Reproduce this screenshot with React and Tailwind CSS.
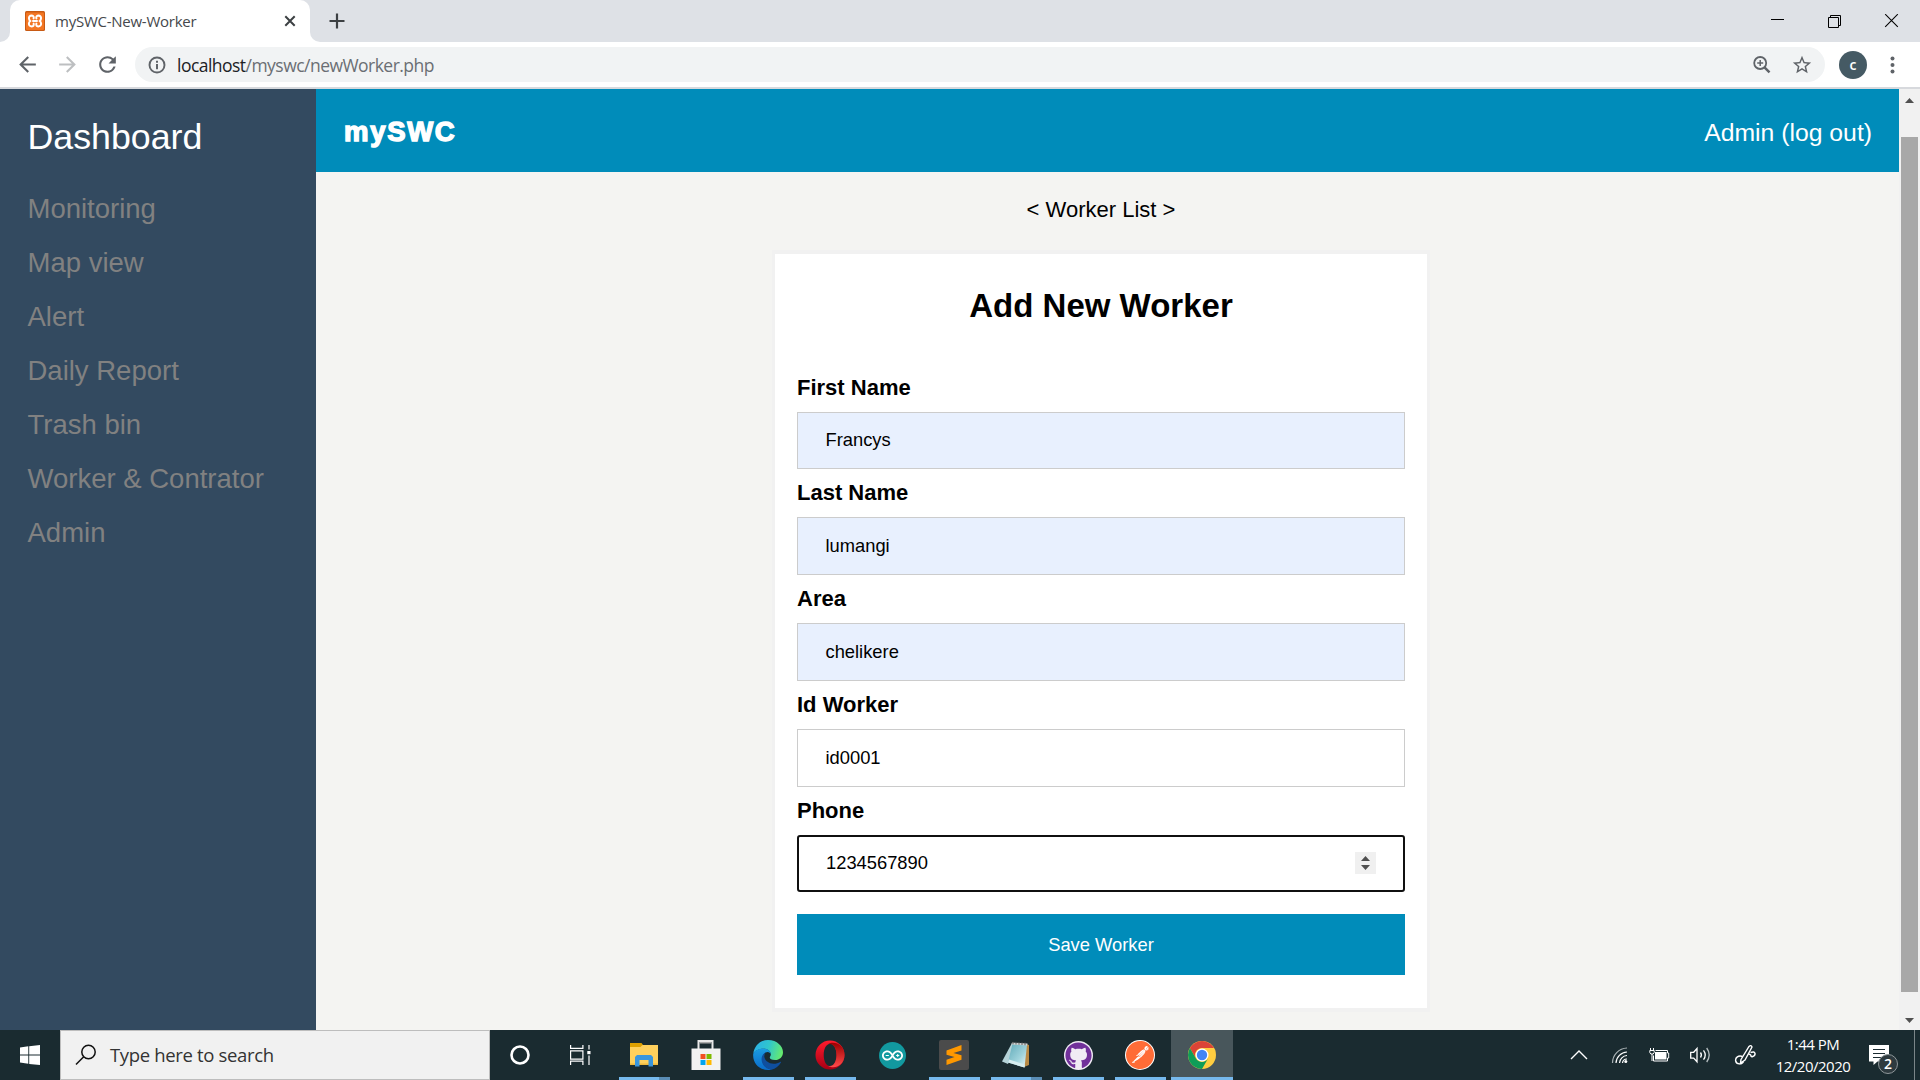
import React from "react";
import { FaGithub } from "react-icons/fa";
import { SiPostman, SiArduino } from "react-icons/si";

const UI = "font-['Open_Sans','Noto_Sans',sans-serif]";

function TabStrip() {
  return (
    <div className="flex h-[42px] items-center bg-[#dee1e6]">
      <div className="flex h-full w-[10px] bg-white">
        <div className="h-full w-full rounded-br-[10px] bg-[#dee1e6]" />
      </div>
      <div className="flex h-full w-[300px] items-center rounded-t-[10px] bg-white pl-[15px]">
        <svg width="20" height="20" viewBox="0 0 20 20">
          <rect width="20" height="20" rx="1.5" fill="#c85a14" />
          <rect x="1" y="1.5" width="18" height="17.5" rx="1" fill="#f37623" />
          <path
            d="M8.600 7.600Q9.300 4.800 6.800 4.600Q3.600 4.800 4 7.600Q4.200 9.200 5.200 10Q4 11 3.900 12.600Q3.800 15.300 6.800 15.400Q9.300 15.200 8.600 12.600M11.400 7.600Q10.700 4.800 13.200 4.600Q16.400 4.800 16 7.600Q15.800 9.200 14.800 10Q16 11 16.100 12.600Q16.200 15.300 13.200 15.400Q10.700 15.200 11.400 12.600M8 10h4"
            fill="none"
            stroke="#fff"
            strokeWidth="2"
            strokeLinecap="round"
          />
        </svg>
        <span className={`ml-[10px] w-[200px] whitespace-nowrap text-[15px] tracking-[-0.25px] text-[#45484c] ${UI}`}>
          mySWC-New-Worker
        </span>
        <svg className="ml-[29px]" width="12" height="12" viewBox="0 0 12 12">
          <path d="M1.300 1.300l9.400 9.400M10.700 1.300l-9.400 9.400" stroke="#3c4043" strokeWidth="2" />
        </svg>
      </div>
      <div className="h-full w-[10px] bg-white">
        <div className="h-full w-full rounded-bl-[10px] bg-[#dee1e6]" />
      </div>
      <svg className="ml-[9px]" width="16" height="16" viewBox="0 0 16 16">
        <path d="M8 .5v15M.5 8h15" stroke="#3c4043" strokeWidth="2.200" />
      </svg>
      <div className="ml-auto flex h-[38px] items-center gap-[42px] pr-[21px]">
        <svg width="15" height="15" viewBox="0 0 15 15">
          <path d="M1 5.500h13" stroke="#000" />
        </svg>
        <svg width="15" height="15" viewBox="0 0 15 15" fill="none" stroke="#000">
          <path d="M1.500 3.500h10v10h-10zM3.500 3v-1.500h10v10h-1.500" />
        </svg>
        <svg width="15" height="15" viewBox="0 0 15 15">
          <path d="M1.200 .2l12.600 12.600M13.800 .2l-12.600 12.600" stroke="#000" strokeWidth="1.100" />
        </svg>
      </div>
    </div>
  );
}

function Toolbar() {
  return (
    <div className="flex h-[47px] items-center border-b-2 border-[#d7d9dd] bg-white pl-[15px]">
      <svg width="25" height="25" viewBox="0 0 24 24" fill="#5f6368">
        <path d="M20 11H7.830l5.590-5.590L12 4l-8 8 8 8 1.410-1.410L7.830 13H20v-2z" />
      </svg>
      <svg className="ml-[15px]" width="25" height="25" viewBox="0 0 24 24" fill="#bdbfc1">
        <path d="M12 4l-1.410 1.410L16.170 11H4v2h12.170l-5.580 5.590L12 20l8-8z" />
      </svg>
      <svg className="ml-[15px]" width="25" height="25" viewBox="0 0 24 24" fill="#5f6368">
        <path d="M17.650 6.350A7.958 7.958 0 0 0 12 4c-4.420 0-7.990 3.580-7.990 8s3.570 8 7.990 8c3.730 0 6.840-2.550 7.730-6h-2.080A5.990 5.990 0 0 1 12 18c-3.310 0-6-2.690-6-6s2.690-6 6-6c1.660 0 3.140.69 4.220 1.780L13 11h7V4l-2.350 2.350z" />
      </svg>
      <div className="ml-[15px] flex h-[35px] w-[1690px] items-center rounded-full bg-[#f1f3f4] pl-[12px] pr-[12px]">
        <svg width="20" height="20" viewBox="0 0 20 20">
          <circle cx="10" cy="10" r="7.500" fill="none" stroke="#5f6368" strokeWidth="1.900" />
          <path d="M10 9v5.200M10 5.800v2" stroke="#5f6368" strokeWidth="2" />
        </svg>
        <span className={`ml-[10px] whitespace-nowrap pt-px text-[17.5px] tracking-[-0.53px] text-[#6a6e73] ${UI}`}>
          <span className="text-[#202124]">localhost</span>/myswc/newWorker.php
        </span>
        <svg className="ml-auto" width="20" height="20" viewBox="0 0 20 20" fill="none" stroke="#5f6368">
          <circle cx="8.200" cy="8" r="6" strokeWidth="1.800" />
          <path d="M12.500 12.300l5 5" strokeWidth="2.400" />
          <path d="M8.200 5v6M5.200 8h6" strokeWidth="1.500" />
        </svg>
        <svg className="ml-[19px]" width="22" height="22" viewBox="0 0 24 24" fill="#5f6368">
          <path d="M22 9.240l-7.190-.62L12 2 9.190 8.630 2 9.240l5.460 4.730L5.820 21 12 17.270 18.180 21l-1.630-7.030L22 9.240zM12 15.400l-3.760 2.270 1-4.280-3.320-2.880 4.380-.38L12 6.100l1.710 4.040 4.380.38-3.320 2.880 1 4.280L12 15.400z" />
        </svg>
      </div>
      <div className={`ml-[14px] flex h-[28px] w-[28px] items-center justify-center rounded-full bg-[#455a64] text-[14px] font-semibold text-white ${UI}`}>
        <span>c</span>
      </div>
      <svg className="ml-[23px]" width="5" height="18" viewBox="0 0 5 18" fill="#5f6368">
        <circle cx="2.500" cy="2.500" r="2" />
        <circle cx="2.500" cy="9" r="2" />
        <circle cx="2.500" cy="15.500" r="2" />
      </svg>
    </div>
  );
}

const NAV = ["Monitoring", "Map view", "Alert", "Daily Report", "Trash bin", "Worker & Contrator", "Admin"];

function Sidebar() {
  return (
    <nav className="w-[316px] shrink-0 bg-[#334a60] pl-[27.5px]">
      <div className="h-[93px] pt-[21px] text-[35.75px] leading-[54px] text-white">Dashboard</div>
      {NAV.map((n) => (
        <div key={n} className="h-[54px] text-[27.5px] leading-[54px] text-[#818181]">
          {n}
        </div>
      ))}
    </nav>
  );
}

function Field({ label, children }) {
  return (
    <label className="block">
      <div className="h-[48px] text-[22px] font-bold leading-[48px]">{label}</div>
      {children}
    </label>
  );
}

const BOX = "flex items-center border border-[#ccc] pl-[27.5px] text-[18.33px]";

function WorkerForm() {
  return (
    <div className="w-[658px] border-x-[3px] border-y-4 border-[#f1f1f1] bg-white px-[22px] pb-[33px]">
      <h2 className="mb-[12px] h-[98px] pt-[5px] text-center text-[33px] font-bold leading-[94px]">Add New Worker</h2>
      <div>
        <Field label="First Name">
          <div className={`h-[57px] bg-[#e8f0fe] pb-[2px] ${BOX}`}>Francys</div>
        </Field>
        <Field label="Last Name">
          <div className={`h-[58px] bg-[#e8f0fe] ${BOX}`}>lumangi</div>
        </Field>
        <Field label="Area">
          <div className={`h-[58px] bg-[#e8f0fe] ${BOX}`}>chelikere</div>
        </Field>
        <Field label="Id Worker">
          <div className={`h-[58px] bg-white ${BOX}`}>id0001</div>
        </Field>
        <Field label="Phone">
          <div className="flex h-[57px] items-center justify-between rounded-[3px] border-2 border-[#101010] pb-px pl-[27px] pr-[27px] text-[18.33px]">
            1234567890
            <span className="flex h-[22px] w-[21px] items-center justify-center bg-[#f0f0f0]">
              <svg width="9" height="14" viewBox="0 0 9 14" fill="#505050">
                <path d="M0 5L4.500 0L9 5zM0 9h9L4.500 14z" />
              </svg>
            </span>
          </div>
        </Field>
      </div>
      <div className="mt-[22px] flex h-[61px] items-center justify-center bg-[#008cba] text-[18.33px] text-white">
        Save Worker
      </div>
    </div>
  );
}

function Page() {
  return (
    <div className="flex h-[941px] font-['Liberation_Sans',Arial,sans-serif] text-black">
      <Sidebar />
      <div className="flex w-[1583px] flex-col bg-[#f4f4f2]">
        <header className="flex h-[83px] items-center justify-between bg-[#008cba] pl-[28px] pr-[27px] pt-[5px] text-white">
          <span className="pb-[3px] text-[27.5px] font-bold tracking-[1.7px] [-webkit-text-stroke:1.4px_white]">mySWC</span>
          <span className="text-[24.75px]">Admin (log out)</span>
        </header>
        <main className="flex flex-col items-center pr-[13px]">
          <div className="h-[78px] text-[22px] leading-[76px]">&lt; Worker List &gt;</div>
          <WorkerForm />
        </main>
      </div>
      <div className="flex w-[21px] flex-col items-center bg-[#f1f1f1] pt-[9px]">
        <svg width="9" height="5" viewBox="0 0 9 5">
          <path d="M0 5L4.500 0L9 5z" fill="#505050" />
        </svg>
        <div className="mt-[34px] h-[855px] w-[17px] bg-[#a8a8a8]" />
        <svg className="mt-[26px]" width="9" height="5" viewBox="0 0 9 5">
          <path d="M0 0h9L4.500 5z" fill="#505050" />
        </svg>
      </div>
    </div>
  );
}

function ExplorerIcon() {
  return (
    <svg width="28" height="24" viewBox="0 0 28 24">
      <path d="M0 0h11.500l1.500 2-1.500 4H0z" fill="#dea000" />
      <path d="M0 4h10.500l2-2H28v20H0z" fill="#ffd05c" />
      <path d="M0 20.500h28V22H0z" fill="#eeb93c" />
      <path d="M5 23.500V14l2-2h14l2 2v9.500h-4.500V17h-9v6.500z" fill="#3a96dd" />
    </svg>
  );
}

function StoreIcon() {
  return (
    <svg width="30" height="30" viewBox="0 0 30 30">
      <path d="M7.500 9V1h14v8" fill="none" stroke="#e9e9e9" strokeWidth="2" />
      <path d="M8.500 2h12v1.500h-12z" fill="#a9a9a9" />
      <path d="M.5 8.500h29V30H.5z" fill="#f2f2f2" />
      <path d="M9.500 14h5v5h-5z" fill="#f25022" />
      <path d="M15.500 14h5v5h-5z" fill="#7fba00" />
      <path d="M9.500 20h5v5h-5z" fill="#00a4ef" />
      <path d="M15.500 20h5v5h-5z" fill="#ffb900" />
    </svg>
  );
}

function EdgeIcon() {
  return (
    <svg width="30" height="30" viewBox="0 0 256 256">
      <defs>
        <linearGradient id="edgeTop" x1="0" y1="0.300" x2="1" y2="0.500">
          <stop offset="0" stopColor="#2ab0e8" />
          <stop offset="0.500" stopColor="#30c6cc" />
          <stop offset="1" stopColor="#66eb6e" />
        </linearGradient>
        <linearGradient id="edgeLeft" x1="0.500" y1="0" x2="0.500" y2="1">
          <stop offset="0" stopColor="#1b9de2" />
          <stop offset="1" stopColor="#0a6bc9" />
        </linearGradient>
      </defs>
      <path
        d="M2 118C10 50 62 0 128 0c78 0 128 54 128 104 0 40-30 67-67 67-31 0-46-11-46-21 0-8 9-11 9-28 0-24-25-47-62-47C48 75 10 96 2 118z"
        fill="url(#edgeTop)"
      />
      <path
        d="M2 118c9-26 44-46 84-46 40 0 66 24 66 48-4-8-14-17-27-17-25 0-45 24-45 60 0 48 34 82 78 88-10 3-20 5-30 5C52 256-6 194 2 118z"
        fill="url(#edgeLeft)"
      />
      <path
        d="M108 106c-10 14-14 28-10 44 8 30 36 52 78 52 22 0 40-6 56-15 5-3 9 1 6 6-16 30-45 54-81 60-47-5-84-42-84-88 0-28 13-49 35-59z"
        fill="#0f4f9e"
      />
    </svg>
  );
}

function OperaIcon() {
  return (
    <svg width="30" height="30" viewBox="0 0 30 30">
      <defs>
        <linearGradient id="operaL" x1="0" y1="0" x2="0" y2="1">
          <stop offset="0" stopColor="#ff1b2d" />
          <stop offset="1" stopColor="#a70014" />
        </linearGradient>
        <linearGradient id="operaR" x1="0" y1="0" x2="0" y2="1">
          <stop offset="0" stopColor="#9c0000" />
          <stop offset="1" stopColor="#ff4b4b" />
        </linearGradient>
      </defs>
      <path
        fillRule="evenodd"
        d="M15 .5a14.500 14.500 0 1 0 0 29a14.500 14.500 0 1 0 0-29zM15.200 3.800c4 0 6.300 5 6.300 11.200s-2.300 11.200-6.300 11.200S8.700 21.200 8.700 15s2.500-11.200 6.500-11.200z"
        fill="url(#operaL)"
      />
      <path
        d="M13 4.300C18 2.500 21.500 8 21.500 15s-3.500 12.500-8.500 10.700C18.500 29.500 29.500 26 29.500 15S18.500.5 13 4.300z"
        fill="url(#operaR)"
      />
    </svg>
  );
}

function ArduinoIcon() {
  return (
    <span className="flex h-[27px] w-[27px] items-center justify-center rounded-full bg-[#12999f]">
      <SiArduino size={21} color="#fff" />
    </span>
  );
}

function SublimeIcon() {
  return (
    <svg width="30" height="30" viewBox="0 0 30 30">
      <rect width="30" height="30" rx="2" fill="#4b4b4b" />
      <path d="M7.500 10.500L22.500 5v5.500L14.500 13l8 2.300v4.500L7.500 25v-5.200l8-2.800-8-2.300z" fill="#ff9800" />
    </svg>
  );
}

function NotepadIcon() {
  return (
    <svg width="30" height="30" viewBox="0 0 30 30">
      <defs>
        <linearGradient id="pad" x1="0" y1="0" x2="1" y2="1">
          <stop offset="0" stopColor="#5fa9b8" />
          <stop offset="0.600" stopColor="#9fd3dc" />
          <stop offset="1" stopColor="#eef8f9" />
        </linearGradient>
      </defs>
      <path d="M25 4l3 1v20l-5 2z" fill="#b98a45" />
      <path d="M11 3L1 21.500l6 2.500 8-20z" fill="#b5d3d8" />
      <path d="M11.500 3.500L26 5l-2.500 22.500-16.500-5z" fill="url(#pad)" />
      <path d="M7 22.500l16.500 5 .4-3-15.900-5z" fill="#d7edf0" />
      <path d="M11 2.500l15.500 1-.2 2L10.500 4.500z" fill="#cfd4d4" />
      <path d="M12 1.800v2.500M15 1.800v2.700M18 2v2.700M21 2.200v2.800M24 2.500v2.800" stroke="#555" strokeWidth=".9" />
    </svg>
  );
}

function GithubIcon() {
  return (
    <span className="flex h-[29px] w-[29px] items-center justify-center rounded-full bg-[#f0ebf4]">
      <FaGithub size={27} className="shrink-0" color="#71309a" />
    </span>
  );
}

function PostmanIcon() {
  return (
    <span className="flex h-[30px] w-[30px] items-center justify-center rounded-full bg-white">
      <SiPostman size={28} color="#ff6c37" />
    </span>
  );
}

function ChromeIcon() {
  return (
    <svg width="28" height="28" viewBox="0 0 28 28">
      <circle cx="14" cy="14" r="14" fill="#ffcd40" />
      <path d="M1.880 7A14 14 0 0 1 26.120 7H14A7 7 0 0 0 7.940 17.500z" fill="#db4437" />
      <path d="M1.880 7A14 14 0 0 0 14 28L20.060 17.500A7 7 0 0 1 7.940 17.500z" fill="#0f9d58" />
      <circle cx="14" cy="14" r="6.500" fill="#fff" />
      <circle cx="14" cy="14" r="5.200" fill="#4285f4" />
    </svg>
  );
}

const APPS = [
  { id: "explorer", Icon: ExplorerIcon, bar: "split" },
  { id: "store", Icon: StoreIcon, bar: "none" },
  { id: "edge", Icon: EdgeIcon, bar: "full" },
  { id: "opera", Icon: OperaIcon, bar: "full" },
  { id: "arduino", Icon: ArduinoIcon, bar: "none" },
  { id: "sublime", Icon: SublimeIcon, bar: "full" },
  { id: "notepad", Icon: NotepadIcon, bar: "split" },
  { id: "github", Icon: GithubIcon, bar: "full" },
  { id: "postman", Icon: PostmanIcon, bar: "full" },
  { id: "chrome", Icon: ChromeIcon, bar: "active" },
];

function AppButton({ Icon, bar }) {
  return (
    <div className={`flex h-full w-[62px] flex-col items-center ${bar === "active" ? "bg-[#48565b]" : ""}`}>
      <div className="flex h-[47px] items-center justify-center pt-[3px]">
        <Icon />
      </div>
      {bar === "active" && <div className="h-[3px] w-full bg-[#76b9ed]" />}
      {bar === "full" && <div className="h-[3px] w-[51px] bg-[#76b9ed]" />}
      {bar === "split" && (
        <div className="flex h-[3px] w-[51px]">
          <div className="w-[40px] bg-[#76b9ed]" />
          <div className="w-[11px] bg-[#5a8db5]" />
        </div>
      )}
    </div>
  );
}

function Tray() {
  return (
    <div className="ml-auto flex h-full items-center text-white">
      <svg width="18" height="12" viewBox="0 0 18 12">
        <path d="M1 10l8-8 8 8" fill="none" stroke="#fff" strokeWidth="1.400" />
      </svg>
      <svg className="ml-[23px]" width="18" height="18" viewBox="0 0 18 18" fill="none" stroke="#fff" strokeWidth="1.200">
        <path d="M1.500 17A15 15 0 0 1 16 2" stroke="#aab3b5" />
        <path d="M5 17A11.500 11.500 0 0 1 16 6" />
        <path d="M8.500 17A8 8 0 0 1 16 9.500" />
        <path d="M11.500 17A4.500 4.500 0 0 1 16 13" />
        <circle cx="14.800" cy="15.500" r="1.500" fill="#fff" stroke="none" />
      </svg>
      <svg className="ml-[20px]" width="21" height="16" viewBox="0 0 21 16">
        <path d="M6 5h11.500v7.500H6z" fill="#fff" />
        <path d="M6.500 3.500h12V6h1.200v5h-1.200v3h-14V8.500" fill="none" stroke="#fff" />
        <path d="M1.500 1v2.500M4.500 1v2.500" stroke="#fff" />
        <path d="M.8 3.500h4.400v2l-1 1.500H1.800l-1-1.500zM3 7v7" fill="none" stroke="#fff" />
      </svg>
      <svg className="ml-[19px]" width="23" height="18" viewBox="0 0 23 18" fill="none" stroke="#fff" strokeWidth="1.300">
        <path d="M1.700 6.300h3L8 2.500v13.300l-3.300-3.700h-3z" />
        <path d="M11.500 6.500q1.800 2.500 0 5M14.500 4.300q3.500 4.700 0 9.400" />
        <path d="M17.700 2q5 7 0 14" stroke="#b6bec0" />
      </svg>
      <svg className="ml-[22px]" width="22" height="22" viewBox="0 0 22 22" fill="none" stroke="#fff" strokeWidth="1.400">
        <path d="M7 15.500L15 2.500q2-2 3 .5L11 16l-4.500 3z" />
        <path d="M8.500 12.500c-4-1.500-7.500 1-6.800 4.500s6.300 4 7.800.5M14.500 10q3 .5 2.500 3M16.500 8.500q4-1.500 4.500 1t-3.500 3.500" />
      </svg>
      <div className={`ml-[12px] w-[90px] text-center text-[15px] leading-[22.5px] tracking-[-0.5px] ${UI}`}>
        <div>1:44 PM</div>
        <div>12/20/2020</div>
      </div>
      <div className="relative ml-[11px] h-[20px] w-[20px]">
        <svg width="20" height="20" viewBox="0 0 20 20">
          <path d="M0 0h20v16.500H8.500L4.500 20v-3.500H0z" fill="#fff" />
          <path d="M4 4.500h12M4 8.500h12M4 12.500h8" stroke="#1b2b31" strokeWidth="1.200" />
        </svg>
        <div className={`absolute left-[9px] top-[9px] flex h-[20px] w-[20px] items-center justify-center rounded-full border border-[#8f979a] bg-[#2e3a3f] text-[14px] font-semibold leading-none ${UI}`}>
          2
        </div>
      </div>
      <div className="ml-[25px] h-full w-px bg-[#7b8588]" />
      <div className="w-[5px]" />
    </div>
  );
}

function Taskbar() {
  return (
    <div className="flex h-[50px] items-center bg-[#1a2b30]">
      <div className="flex w-[60px] items-center justify-center">
        <svg width="20" height="20" viewBox="0 0 20 20" fill="#fff">
          <path d="M0 2.600L8.300 1.300V9.500H0zM9.200 1.200L20 0v9.500H9.200zM0 10.500h8.300v8.200L0 17.500zM9.200 10.500H20V20L9.200 18.900z" />
        </svg>
      </div>
      <div className="flex h-[50px] w-[430px] items-center border border-[#bdbdbd] bg-[#f1f1f1] pl-[14px]">
        <svg width="22" height="22" viewBox="0 0 22 22" fill="none" stroke="#111" strokeWidth="1.500">
          <circle cx="13.500" cy="8" r="6.700" />
          <path d="M8.700 12.800L1 20.500" />
        </svg>
        <span className={`ml-[13px] whitespace-nowrap text-[18.5px] tracking-[-0.34px] text-[#333] ${UI}`}>Type here to search</span>
      </div>
      <svg className="ml-[19px]" width="22" height="22" viewBox="0 0 22 22">
        <circle cx="11" cy="11" r="8.500" fill="none" stroke="#fff" strokeWidth="2.600" />
      </svg>
      <svg className="ml-[39px]" width="22" height="20" viewBox="0 0 22 20" fill="none" stroke="#fff" strokeWidth="1.200">
        <path d="M.6 0v3.400h12.300V0M.6 20v-3.800h12.300V20M.6 5.800h12.300v8.400H.6zM19 0v4.500M19 10.500V20" />
        <path d="M17.300 6h3.200v3.200h-3.200z" fill="#fff" stroke="none" />
      </svg>
      <div className="ml-[21px] flex h-full">
        {APPS.map((a) => (
          <AppButton key={a.id} Icon={a.Icon} bar={a.bar} />
        ))}
      </div>
      <Tray />
    </div>
  );
}

export default function App() {
  return (
    <div className="flex h-[1080px] w-[1920px] flex-col overflow-hidden bg-white">
      <TabStrip />
      <Toolbar />
      <Page />
      <Taskbar />
    </div>
  );
}
